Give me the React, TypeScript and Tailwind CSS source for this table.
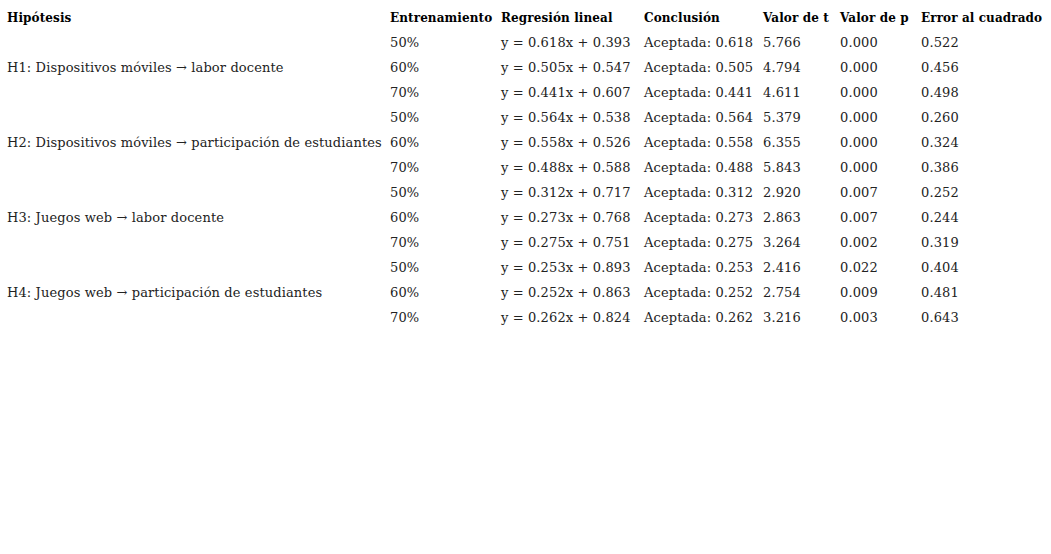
import React from "react";

const rows = [
  { h: "H1: Dispositivos móviles → labor docente", d: [
    ["50%", "y = 0.618x + 0.393", "Aceptada: 0.618", "5.766", "0.000", "0.522"],
    ["60%", "y = 0.505x + 0.547", "Aceptada: 0.505", "4.794", "0.000", "0.456"],
    ["70%", "y = 0.441x + 0.607", "Aceptada: 0.441", "4.611", "0.000", "0.498"],
  ]},
  { h: "H2: Dispositivos móviles → participación de estudiantes", d: [
    ["50%", "y = 0.564x + 0.538", "Aceptada: 0.564", "5.379", "0.000", "0.260"],
    ["60%", "y = 0.558x + 0.526", "Aceptada: 0.558", "6.355", "0.000", "0.324"],
    ["70%", "y = 0.488x + 0.588", "Aceptada: 0.488", "5.843", "0.000", "0.386"],
  ]},
  { h: "H3: Juegos web → labor docente", d: [
    ["50%", "y = 0.312x + 0.717", "Aceptada: 0.312", "2.920", "0.007", "0.252"],
    ["60%", "y = 0.273x + 0.768", "Aceptada: 0.273", "2.863", "0.007", "0.244"],
    ["70%", "y = 0.275x + 0.751", "Aceptada: 0.275", "3.264", "0.002", "0.319"],
  ]},
  { h: "H4: Juegos web → participación de estudiantes", d: [
    ["50%", "y = 0.253x + 0.893", "Aceptada: 0.253", "2.416", "0.022", "0.404"],
    ["60%", "y = 0.252x + 0.863", "Aceptada: 0.252", "2.754", "0.009", "0.481"],
    ["70%", "y = 0.262x + 0.824", "Aceptada: 0.262", "3.216", "0.003", "0.643"],
  ]},
];

const widths = ["w-[383px]", "w-[111px]", "w-[143px]", "w-[119px]", "w-[77px]", "w-[81px]", "w-[125px]"];
const heads = ["Hipótesis", "Entrenamiento", "Regresión lineal", "Conclusión", "Valor de t", "Valor de p", "Error al cuadrado"];

export default function App() {
  return (
    <div className="w-[1051px] h-[554px] bg-white text-black pl-[7px] pt-[5px]" style={{ fontFamily: '"DejaVu Serif", serif' }}>
      <table className="border-collapse table-fixed">
        <thead>
          <tr className="h-[25px]">
            {heads.map((t, i) => (
              <th key={t} className={`${widths[i]} text-left text-[12px] tracking-[0.1px] font-bold p-0 align-middle whitespace-nowrap`}>{t}</th>
            ))}
          </tr>
        </thead>
        <tbody className="text-[13px] tracking-[0.12px] text-[#222]">
          {rows.map((g) =>
            g.d.map((r, j) => (
              <tr key={g.h + j} className="h-[25px]">
                {j === 0 && (
                  <td rowSpan={3} className="p-0 align-middle whitespace-nowrap">{g.h}</td>
                )}
                {r.map((c, k) => (
                  <td key={k} className="p-0 align-middle whitespace-nowrap">{c}</td>
                ))}
              </tr>
            ))
          )}
        </tbody>
      </table>
    </div>
  );
}
